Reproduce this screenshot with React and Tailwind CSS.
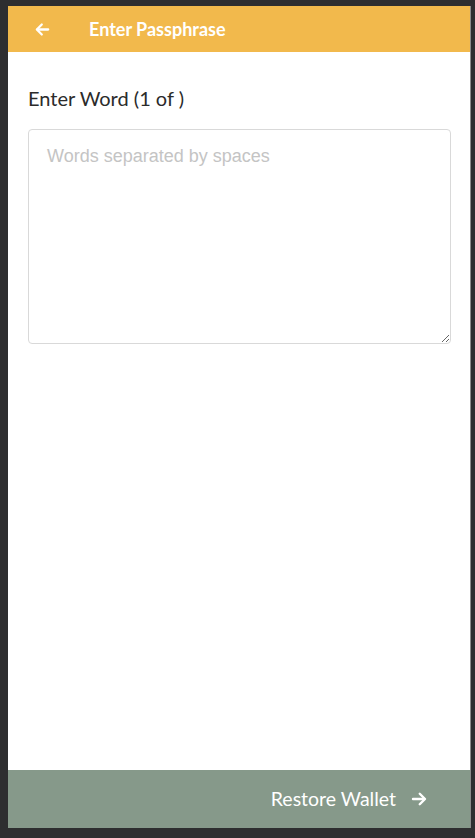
import React from "react";

export default function App() {
  return (
    <div className="w-[475px] h-[838px] bg-[#2e2e30] pt-[6px] pl-[8px] pr-[4px] pb-[10px]" style={{ fontFamily: "Lato, 'Noto Sans', sans-serif" }}>
      <div className="h-full flex flex-col bg-white border-r border-[#8a8a8a]">
        <div className="h-[46px] bg-[#f2b94c] flex items-center shrink-0">
          <svg className="ml-[26px]" width="17" height="17" viewBox="0 0 24 24" fill="none" stroke="white" strokeWidth="3.2" strokeLinecap="round" strokeLinejoin="round">
            <path d="M20 12H5" />
            <path d="M11 5l-7 7 7 7" />
          </svg>
          <span className="ml-[38px] text-white font-bold text-[18px]">Enter Passphrase</span>
        </div>
        <div className="flex-1 px-[20px] pt-[33px]">
          <div className="text-[20px] text-[#2b2b2b] leading-[26px]">Enter Word (1 of )</div>
          <textarea
            className="mt-[18px] w-[423px] h-[215px] border border-[#d9d9d9] rounded-[4px] px-[18px] py-[13px] text-[18px] outline-none block"
            style={{ fontFamily: "'Liberation Sans', Arial, sans-serif" }}
            placeholder="Words separated by spaces"
          />
        </div>
        <div className="h-[58px] bg-[#86998a] flex items-center justify-end pr-[42px] shrink-0">
          <span className="text-white text-[19.5px]">Restore Wallet</span>
          <svg className="ml-[14px]" width="18" height="18" viewBox="0 0 24 24" fill="none" stroke="white" strokeWidth="3.2" strokeLinecap="round" strokeLinejoin="round">
            <path d="M4 12h15" />
            <path d="M13 5l7 7-7 7" />
          </svg>
        </div>
      </div>
      <style>{`textarea::placeholder{color:#c4c4c4;}`}</style>
    </div>
  );
}
